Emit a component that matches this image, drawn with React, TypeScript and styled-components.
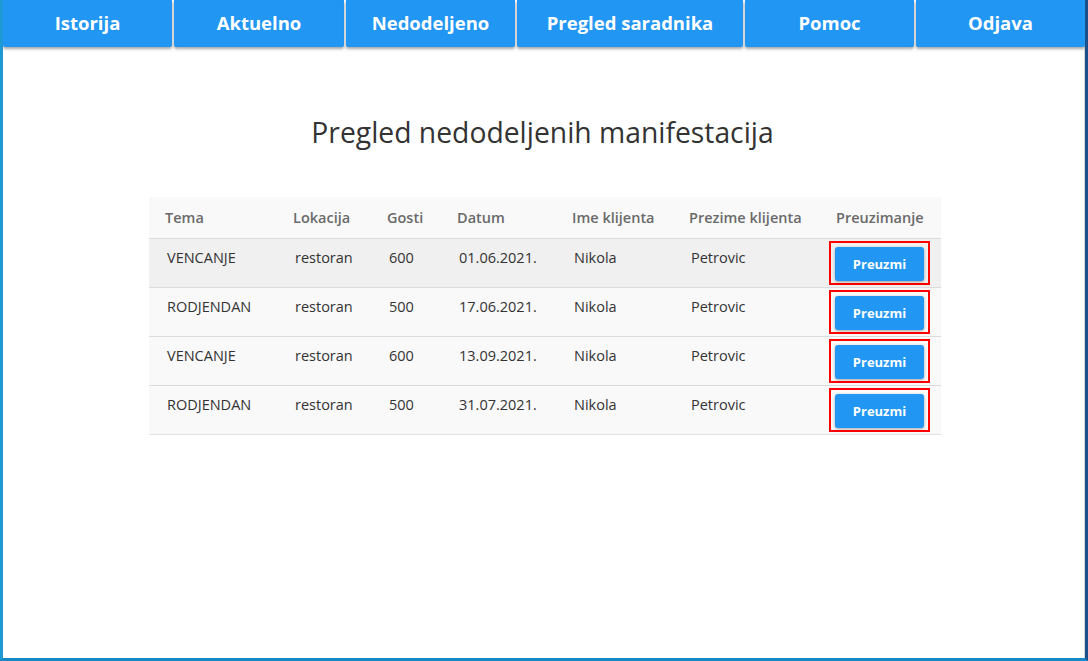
import React from "react";
import styled, { createGlobalStyle } from "styled-components";

const Global = createGlobalStyle`
  html, body { margin: 0; padding: 0; background: #fff; }
  body { font-family: "Open Sans", "Noto Sans", sans-serif; }
  * { box-sizing: border-box; }
`;

const Frame = styled.div`
  width: 1088px;
  height: 661px;
  border-left: 3px solid #1d9ad6;
  border-bottom: 3px solid #1688c6;
  border-right: 3px solid #1b4f8a;
  box-shadow: inset -1px 0 0 #d8d8d8;
  background: #fff;
  overflow: hidden;
`;

const Nav = styled.nav`
  display: flex;
  gap: 2px;
  height: 47px;
`;

const NavButton = styled.button<{ $w: number }>`
  width: ${(p) => p.$w}px;
  flex: none;
  height: 47px;
  border: none;
  border-radius: 0 0 2px 2px;
  background: #2196f3;
  color: #fff;
  font-family: "Open Sans", sans-serif;
  font-weight: 700;
  font-size: 18.5px;
  box-shadow: 0 2px 3px rgba(0, 0, 0, 0.35);
  padding: 0 0 2px;
  cursor: pointer;
`;

const Title = styled.h1`
  margin: 66px 0 0;
  text-align: center;
  font-weight: 400;
  font-size: 28.3px;
  line-height: 38px;
  color: #333;
  padding-right: 3px;
`;

const Table = styled.table`
  margin: 46px 0 0 146px;
  width: 792px;
  border-collapse: collapse;
  table-layout: fixed;
  background: #f9f9f9;
  font-size: 14.5px;
`;

const Th = styled.th<{ $w: number }>`
  width: ${(p) => p.$w}px;
  text-align: left;
  font-weight: 600;
  color: #6a6a6a;
  height: 41px;
  padding: 0 0 0 16px;
  vertical-align: middle;
`;

const Row = styled.tr<{ $hl?: boolean }>`
  background: ${(p) => (p.$hl ? "#f0f0f0" : "#f9f9f9")};
  border-top: 1px solid #dcdcdc;
  &:last-child { border-bottom: 1px solid #e2e2e2; }
`;

const Td = styled.td`
  height: 49px;
  padding: 0 0 10px 18px;
  color: #333;
  vertical-align: middle;
  white-space: nowrap;
`;

const ActionTd = styled.td`
  height: 49px;
  padding: 0 0 0 9px;
  vertical-align: middle;
`;

const Marked = styled.span`
  display: inline-block;
  border: 2px solid #f00;
  padding: 4px 4px 2px 4px;
`;

const TakeButton = styled.button`
  width: 89px;
  height: 34px;
  border: none;
  border-radius: 3px;
  background: #2196f3;
  color: #fff;
  font-family: "Open Sans", sans-serif;
  font-weight: 700;
  font-size: 13px;
  box-shadow: 0 1px 3px rgba(0, 0, 0, 0.35);
  cursor: pointer;
  display: block;
`;

const navItems: [string, number][] = [
  ["Istorija", 169],
  ["Aktuelno", 170],
  ["Nedodeljeno", 169],
  ["Pregled saradnika", 226],
  ["Pomoc", 169],
  ["Odjava", 169],
];

const cols: [string, number][] = [
  ["Tema", 128],
  ["Lokacija", 94],
  ["Gosti", 70],
  ["Datum", 115],
  ["Ime klijenta", 117],
  ["Prezime klijenta", 147],
  ["Preuzimanje", 121],
];

const rows = [
  ["VENCANJE", "restoran", "600", "01.06.2021.", "Nikola", "Petrovic"],
  ["RODJENDAN", "restoran", "500", "17.06.2021.", "Nikola", "Petrovic"],
  ["VENCANJE", "restoran", "600", "13.09.2021.", "Nikola", "Petrovic"],
  ["RODJENDAN", "restoran", "500", "31.07.2021.", "Nikola", "Petrovic"],
];

export default function App() {
  return (
    <>
      <Global />
      <Frame>
        <Nav>
          {navItems.map(([label, w]) => (
            <NavButton key={label} $w={w}>
              {label}
            </NavButton>
          ))}
        </Nav>
        <Title>Pregled nedodeljenih manifestacija</Title>
        <Table>
          <thead>
            <tr>
              {cols.map(([c, w]) => (
                <Th key={c} $w={w}>
                  {c}
                </Th>
              ))}
            </tr>
          </thead>
          <tbody>
            {rows.map((r, i) => (
              <Row key={i} $hl={i === 0}>
                {r.map((c, j) => (
                  <Td key={j}>{c}</Td>
                ))}
                <ActionTd>
                  <Marked>
                    <TakeButton>Preuzmi</TakeButton>
                  </Marked>
                </ActionTd>
              </Row>
            ))}
          </tbody>
        </Table>
      </Frame>
    </>
  );
}
